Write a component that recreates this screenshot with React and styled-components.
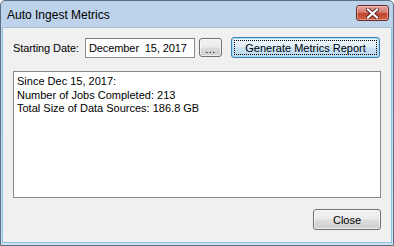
import React from 'react'
import styled, { createGlobalStyle } from 'styled-components'

const GlobalStyle = createGlobalStyle`
  html, body {
    margin: 0;
    padding: 0;
    background: #ffffff;
  }
  body {
    font-family: "Liberation Sans", Arial, sans-serif;
  }
`

const Window = styled.div`
  box-sizing: border-box;
  width: 394px;
  height: 246px;
  display: flex;
  flex-direction: column;
  border: 1px solid #5d6f82;
  border-radius: 5px 5px 0 0;
  background: linear-gradient(to bottom, #bcd2ea 0%, #c3d8ee 40%, #cfe1f3 100%);
  overflow: hidden;
`

const TitleBar = styled.div`
  height: 26px;
  flex: none;
  display: flex;
  align-items: center;
  justify-content: space-between;
  padding: 0 4px 0 6px;
  font-size: 12px;
  color: #000;
`

const Title = styled.span`
  padding-top: 1px;
`

const CloseX = styled.div`
  box-sizing: border-box;
  width: 33px;
  height: 16px;
  margin-top: -2px;
  border: 1px solid #6a2b26;
  border-radius: 3px;
  background: linear-gradient(to bottom, #e2a59e 0%, #d47a6f 45%, #c0442f 55%, #d0624a 100%);
  box-shadow: inset 0 0 0 1px rgba(255, 220, 210, 0.45);
  display: flex;
  align-items: center;
  justify-content: center;
`

const Client = styled.div`
  flex: 1;
  display: flex;
  flex-direction: column;
  margin: 0 1px 2px 1px;
  padding: 9px 10px 12px 10px;
  background: #f0f0f0;
  border: 1px solid #8fc3e3;
  border-top-color: #a4b9d2;
  font-size: 11px;
  color: #000;
`

const Row = styled.div`
  display: flex;
  align-items: center;
  height: 21px;
  white-space: nowrap;
  & > * {
    flex: none;
  }
`

const Label = styled.span`
  width: 68px;
  margin-right: 4px;
  letter-spacing: -0.1px;
`

const DateInput = styled.div`
  box-sizing: border-box;
  width: 110px;
  height: 20px;
  border: 1px solid #8a8d92;
  border-top-color: #7a7c80;
  background: #fff;
  display: flex;
  align-items: center;
  padding-left: 3px;
  white-space: pre;
  letter-spacing: -0.1px;
`

const Button = styled.div`
  box-sizing: border-box;
  width: ${p => p.$w}px;
  height: ${p => p.$h || 21}px;
  margin-left: ${p => p.$ml || 0}px;
  border: 1px solid ${p => (p.$focus ? '#3c7fb1' : '#707070')};
  border-radius: 3px;
  background: ${p =>
    p.$focus
      ? 'linear-gradient(to bottom, #eef6fc 0%, #e0eef9 48%, #c9e2f5 52%, #bcdaf0 100%)'
      : 'linear-gradient(to bottom, #f2f2f2 0%, #ebebeb 48%, #dddddd 52%, #cfcfcf 100%)'};
  box-shadow: inset 0 0 0 1px ${p => (p.$focus ? 'rgba(160, 220, 250, 0.9)' : 'rgba(255,255,255,0.6)')};
  display: flex;
  align-items: center;
  justify-content: center;
  position: relative;
  font-size: 11px;
  color: #000;
  white-space: nowrap;
`

const Dots = styled.span`
  margin-top: 3px;
  letter-spacing: 0.5px;
`

const FocusRing = styled.div`
  position: absolute;
  inset: 2px;
  border: 1px dotted #000;
`

const Output = styled.div`
  box-sizing: border-box;
  margin-top: 13px;
  height: 127px;
  border: 1px solid #828790;
  background: #fff;
  padding: 3px 3px;
  line-height: 13.5px;
`

const Footer = styled.div`
  margin-top: auto;
  display: flex;
  justify-content: flex-end;
`

function App() {
  return (
    <>
      <GlobalStyle />
      <Window>
        <TitleBar>
          <Title>Auto Ingest Metrics</Title>
          <CloseX>
            <svg width="13" height="11" viewBox="0 0 13 11">
              <path d="M2 1.5 L11 9.5 M11 1.5 L2 9.5" stroke="#5a2320" strokeWidth="4" strokeLinecap="square" />
              <path d="M2 1.5 L11 9.5 M11 1.5 L2 9.5" stroke="#ffffff" strokeWidth="2.2" strokeLinecap="square" />
            </svg>
          </CloseX>
        </TitleBar>
        <Client>
          <Row>
            <Label>Starting Date:</Label>
            <DateInput>December  15, 2017</DateInput>
            <Button $w={23} $h={19} $ml={4}>
              <Dots>...</Dots>
            </Button>
            <Button $w={149} $ml={9} $focus>
              <FocusRing />
              Generate Metrics Report
            </Button>
          </Row>
          <Output>
            <div>Since Dec 15, 2017:</div>
            <div>Number of Jobs Completed: 213</div>
            <div>Total Size of Data Sources: 186.8 GB</div>
          </Output>
          <Footer>
            <Button $w={68}>Close</Button>
          </Footer>
        </Client>
      </Window>
    </>
  )
}

export default App
